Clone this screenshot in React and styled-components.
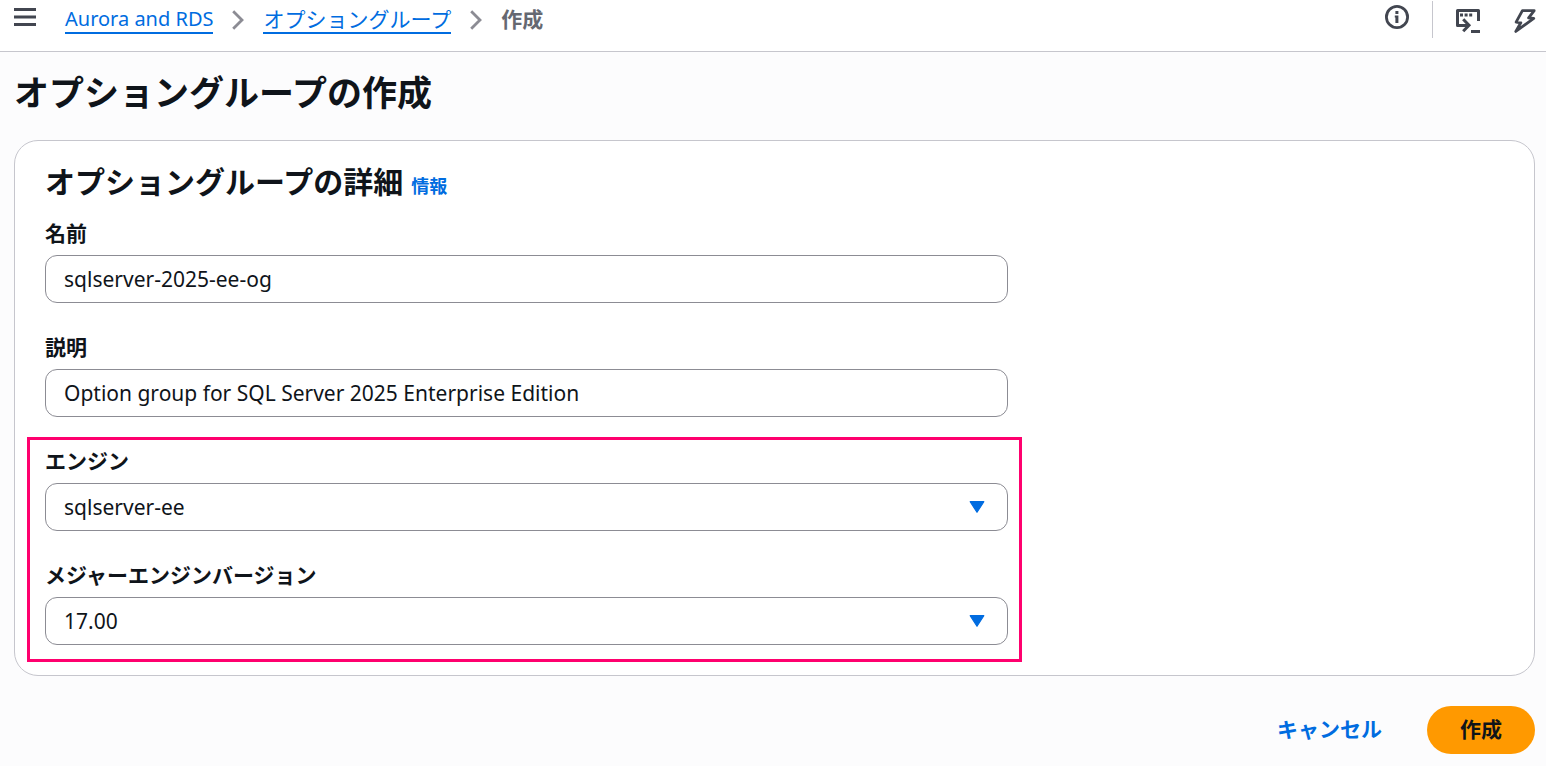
import { useState } from "react"
import styled, { createGlobalStyle } from "styled-components"

export default function App () {

    const [name, setName] = useState("sqlserver-2025-ee-og");
    const [description, setDescription] = useState("Option group for SQL Server 2025 Enterprise Edition");
    const [engine, setEngine] = useState("sqlserver-ee");
    const [version, setVersion] = useState("17.00");

    return (
        <>
            <GlobalStyle />
            <TopBar>
                <IconButton type="button" aria-label="メニュー" $raised>
                    <MenuIcon />
                </IconButton>
                <Breadcrumbs aria-label="パンくずリスト">
                    <BreadcrumbLink href="#home" lang="en">Aurora and RDS</BreadcrumbLink>
                    <ChevronIcon />
                    <BreadcrumbLink href="#option-groups">オプショングループ</BreadcrumbLink>
                    <ChevronIcon />
                    <CurrentPage aria-current="page">作成</CurrentPage>
                </Breadcrumbs>
                <Tools>
                    <IconButton type="button" aria-label="情報パネル" $raised>
                        <InfoIcon />
                    </IconButton>
                    <Divider />
                    <ToolGroup>
                        <IconButton type="button" aria-label="CloudShell">
                            <ShellIcon />
                        </IconButton>
                        <IconButton type="button" aria-label="クイックアクション">
                            <BoltIcon />
                        </IconButton>
                    </ToolGroup>
                </Tools>
            </TopBar>
            <Page>
                <h1>オプショングループの作成</h1>
                <form onSubmit={(e) => e.preventDefault()}>
                    <Card>
                        <CardHeader>
                            <h2>オプショングループの詳細</h2>
                            <a href="#info">情報</a>
                        </CardHeader>
                        <Fields>
                            <Field>
                                <label htmlFor="name">名前</label>
                                <TextInput id="name" type="text" value={name} onChange={(e) => setName(e.target.value)} />
                            </Field>
                            <Field>
                                <label htmlFor="description">説明</label>
                                <TextInput id="description" type="text" value={description} onChange={(e) => setDescription(e.target.value)} />
                            </Field>
                            <HighlightedFields>
                                <SelectField id="engine" label="エンジン" value={engine} options={["sqlserver-ee"]} onChange={setEngine} />
                                <SelectField id="version" label="メジャーエンジンバージョン" value={version} options={["17.00"]} onChange={setVersion} />
                            </HighlightedFields>
                        </Fields>
                    </Card>
                    <Actions>
                        <Button type="button">キャンセル</Button>
                        <Button type="submit" $primary>作成</Button>
                    </Actions>
                </form>
            </Page>
        </>
    )
}

function SelectField ({ id, label, value, options, onChange }) {
    return (
        <Field>
            <label htmlFor={id}>{label}</label>
            <SelectContainer>
                <Select id={id} value={value} onChange={(e) => onChange(e.target.value)}>
                    {options.map((option) => <option key={option}>{option}</option>)}
                </Select>
                <svg width="16" height="12" viewBox="0 0 16 12" aria-hidden="true">
                    <path d="M1.2 .7h13.6L8 11.3z" fill="#006ce0" stroke="#006ce0" strokeWidth="1.2" strokeLinejoin="round" />
                </svg>
            </SelectContainer>
        </Field>
    )
}

function MenuIcon () {
    return (
        <svg width="22" height="20" viewBox="0 0 22 20" aria-hidden="true">
            <path d="M0 2.5h22M0 10h22M0 17.5h22" fill="none" stroke="#424650" strokeWidth="3" />
        </svg>
    )
}

function ChevronIcon () {
    return (
        <svg width="12" height="20" viewBox="0 0 12 20" aria-hidden="true">
            <path d="M1.2 1.2 10 10l-8.8 8.8" fill="none" stroke="#8c8c94" strokeWidth="2.8" />
        </svg>
    )
}

function InfoIcon () {
    return (
        <svg width="24" height="24" viewBox="0 0 24 24" aria-hidden="true">
            <circle cx="12" cy="12" r="10.6" fill="none" stroke="#424650" strokeWidth="2.8" />
            <path d="M10.4 6h3v3h-3zM9.8 10.4h3.6V18h-3v-5.4h-.6z" fill="#424650" />
        </svg>
    )
}

function ShellIcon () {
    return (
        <svg width="24" height="24" viewBox="0 0 24 24" aria-hidden="true">
            <path d="M22.5 12V1.5h-21v15H12" fill="none" stroke="#424650" strokeWidth="3" strokeLinejoin="round" />
            <path d="m7.2 10.3 5.8 6-5.8 6" fill="none" stroke="#424650" strokeWidth="3" />
            <path d="M15 22.5h9" stroke="#424650" strokeWidth="3" />
            <path d="M4 4.4h3v3H4zM8.6 4.4h3v3h-3zM13.2 4.4h3v3h-3z" fill="#424650" />
        </svg>
    )
}

function BoltIcon () {
    return (
        <svg width="22" height="24" viewBox="0 0 22 24" aria-hidden="true">
            <path d="M8.4 1.7h11.8l-5.6 7.2 5.2.5L1.8 22.4l5-8.6-4.7-.6z" fill="none" stroke="#424650" strokeWidth="2.8" strokeLinejoin="round" />
        </svg>
    )
}

const GlobalStyle = createGlobalStyle`
    * {
        box-sizing: border-box;
    }

    body {
        margin: 0;
        background-color: #fcfcfd;
        color: #0f141a;
        font-family: 'Noto Sans', 'Noto Sans CJK JP', sans-serif;
        font-size: 21px;
        line-height: 26px;
    }

    h1, h2 {
        margin: 0;
    }

    button, input, select {
        font-family: inherit;
        font-size: inherit;
        color: inherit;
    }

    svg {
        display: block;
        flex-shrink: 0;
    }
`;

const TopBar = styled.header`
    display: flex;
    align-items: flex-start;
    padding: 0 10px 10px 14px;
    background-color: #ffffff;
    border-bottom: 1px solid #c6c6cd;
`;

const IconButton = styled.button`
    display: flex;
    align-items: center;
    height: ${(props) => props.$raised ? "34px" : "41px"};
    padding: 0;
    border: none;
    background: none;
    cursor: pointer;
`;

const Breadcrumbs = styled.nav`
    display: flex;
    align-items: center;
    gap: 19px;
    height: 40px;
    margin-left: 29px;
`;

const BreadcrumbLink = styled.a`
    color: #006ce0;
    text-decoration: none;
    border-bottom: 2px solid #006ce0;
    white-space: nowrap;

    &:lang(en) {
        font-size: 20px;
    }
`;

const CurrentPage = styled.span`
    padding-bottom: 2px;
    color: #656871;
    font-weight: 700;
`;

const Tools = styled.div`
    display: flex;
    gap: 23px;
    margin-left: auto;
`;

const Divider = styled.div`
    width: 1px;
    height: 37px;
    margin-top: 1px;
    background-color: #c6c6cd;
`;

const ToolGroup = styled.div`
    display: flex;
    gap: 34px;
`;

const Page = styled.main`
    padding: 19px 11px 12px 14px;

    h1 {
        margin-bottom: 25px;
        font-size: 35px;
        line-height: 44px;
    }
`;

const Card = styled.section`
    padding: 24px 30px 30px;
    background-color: #ffffff;
    border: 1px solid #c6c6cd;
    border-radius: 24px;
`;

const CardHeader = styled.div`
    display: flex;
    align-items: baseline;
    gap: 8px;
    margin-bottom: 20px;

    h2 {
        font-size: 30px;
        line-height: 34px;
    }

    a {
        color: #006ce0;
        font-size: 18px;
        font-weight: 700;
        line-height: 20px;
        text-decoration: none;
    }
`;

const Fields = styled.div`
    display: flex;
    flex-direction: column;
    gap: 30px;
    width: 66%;
`;

const HighlightedFields = styled.div`
    position: relative;
    display: flex;
    flex-direction: column;
    gap: 30px;

    &::after {
        content: "";
        position: absolute;
        inset: -10px -14px -17px -18px;
        border: 3px solid #ff006e;
        pointer-events: none;
    }
`;

const Field = styled.div`
    display: flex;
    flex-direction: column;
    gap: 8px;

    label {
        font-weight: 700;
        line-height: 28px;
    }
`;

const TextInput = styled.input`
    width: 100%;
    height: 48px;
    padding: 0 18px;
    background-color: #ffffff;
    border: 1px solid #8c8c94;
    border-radius: 12px;
`;

const SelectContainer = styled.div`
    position: relative;

    svg {
        position: absolute;
        top: 18px;
        right: 23px;
        pointer-events: none;
    }
`;

const Select = styled(TextInput).attrs({ as: "select" })`
    display: block;
    appearance: none;
    cursor: pointer;
`;

const Actions = styled.div`
    display: flex;
    justify-content: flex-end;
    gap: 12px;
    margin-top: 30px;
`;

const Button = styled.button`
    height: 48px;
    padding: 0 33px 5px;
    background-color: ${(props) => props.$primary ? "#ff9900" : "transparent"};
    color: ${(props) => props.$primary ? "#0f141a" : "#006ce0"};
    border: none;
    border-radius: 24px;
    font-weight: 700;
    cursor: pointer;
`;
